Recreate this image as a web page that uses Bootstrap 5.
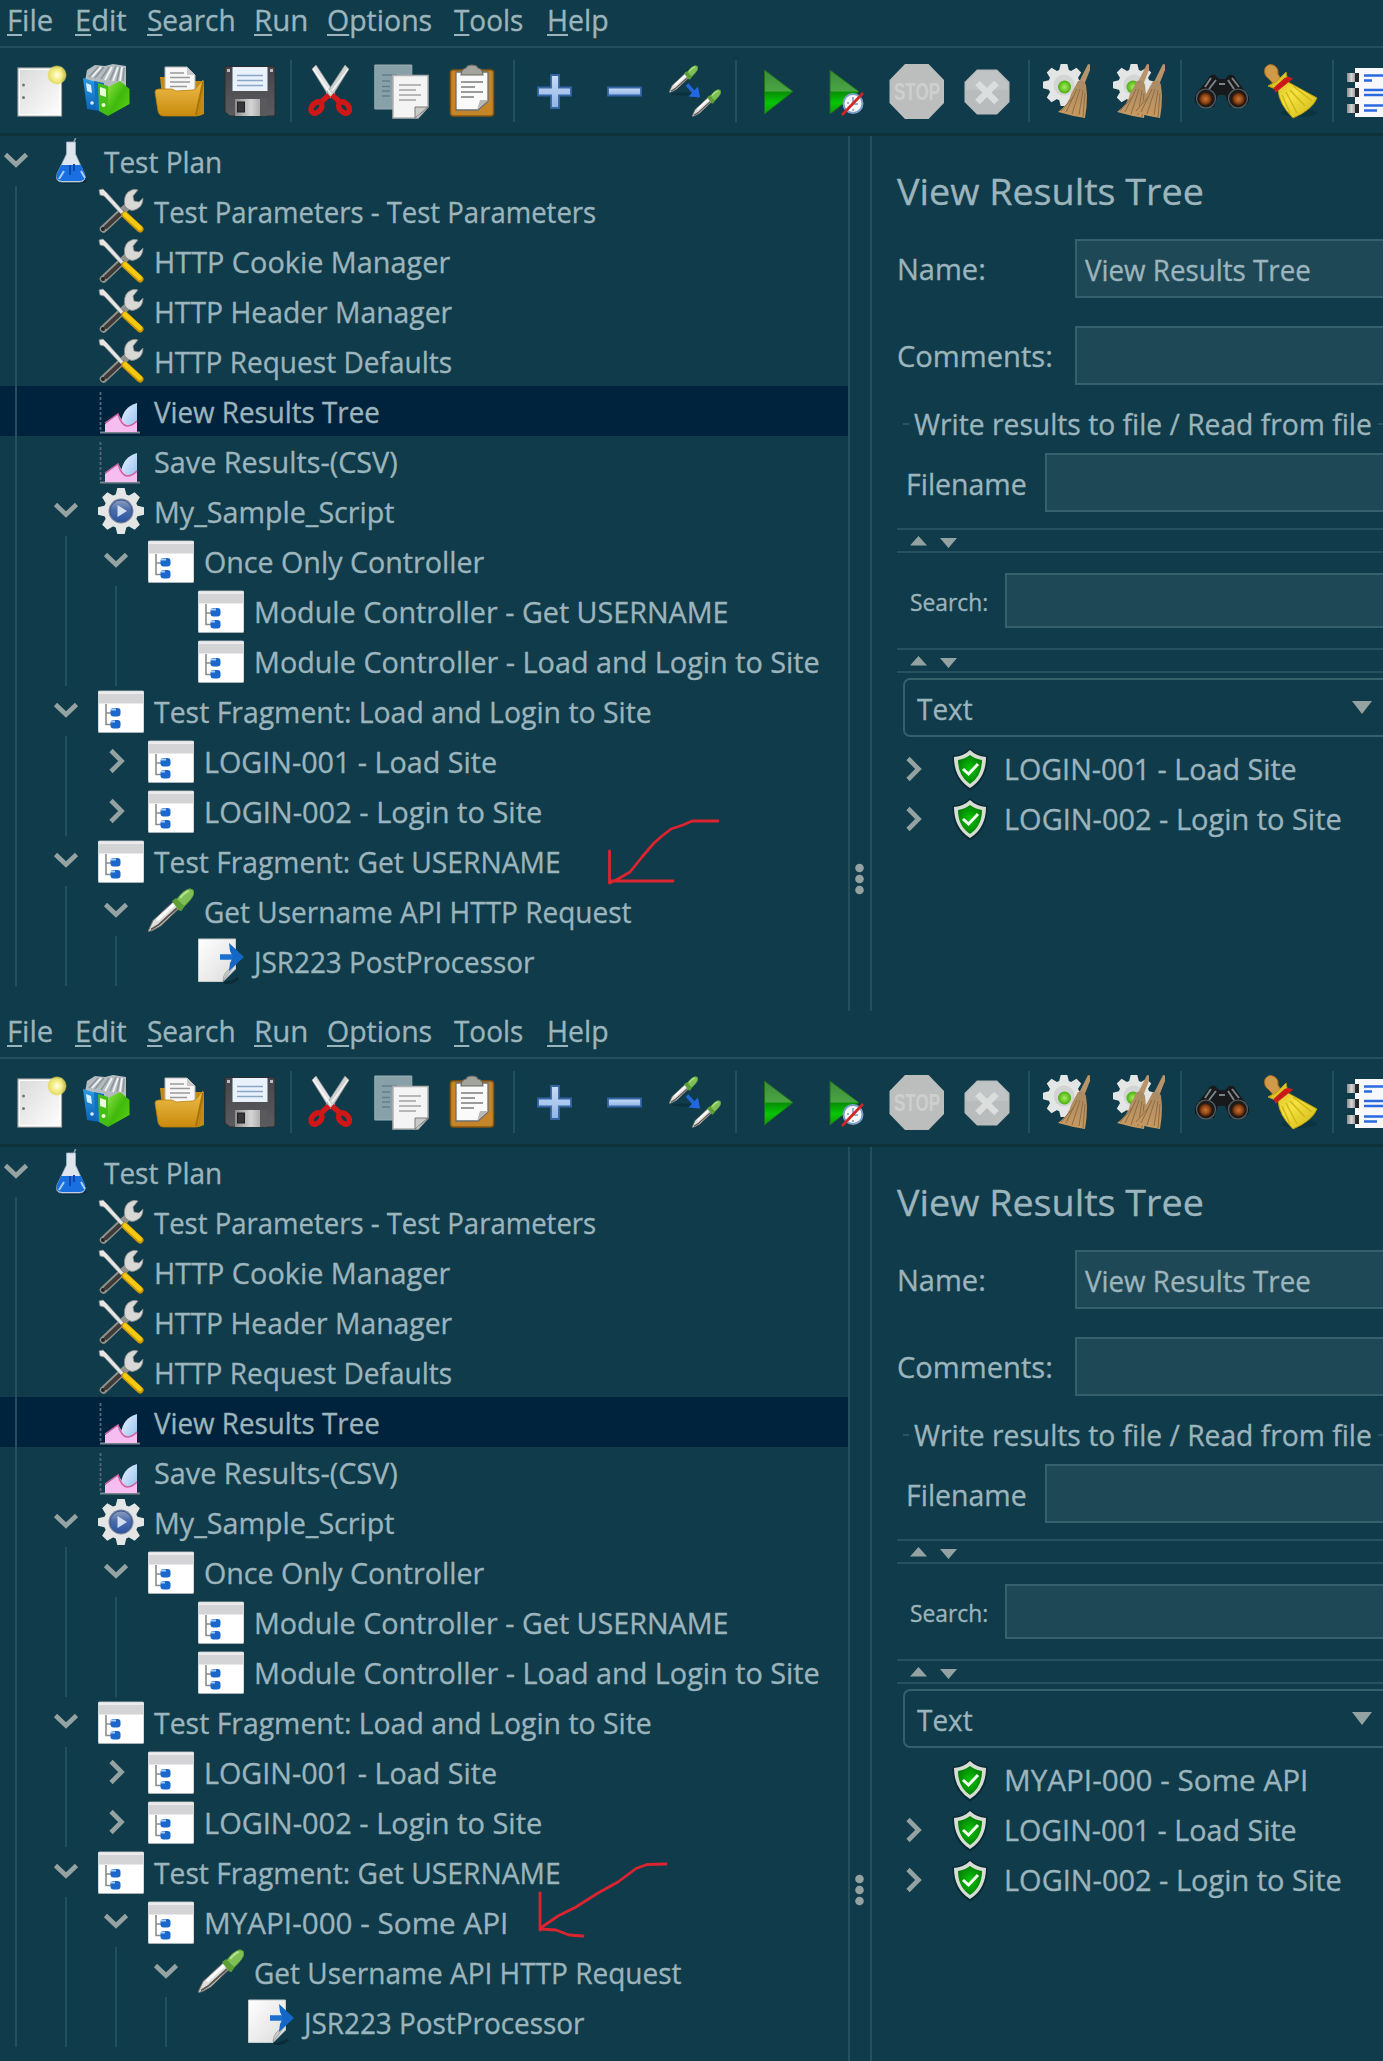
<!DOCTYPE html>
<html lang="en">
<head>
<meta charset="utf-8">
<title>View Results Tree</title>
<link href="https://cdn.jsdelivr.net/npm/bootstrap@5.3.0/dist/css/bootstrap.min.css" rel="stylesheet">
<style>
  body{background:#0f3b4a;color:#9cb4bc;font-family:"Open Sans","Noto Sans",sans-serif;font-size:30px;line-height:50px;overflow:hidden}
  .app-window{height:1011px}
  .app-window + .app-window{height:1050px}
  .fit{display:inline-block;white-space:pre;transform-origin:0 50%;-webkit-text-stroke:.35px #9cb4bc}
  .menu-bar{height:48px;padding-left:7px;line-height:39px;border-bottom:2px solid #24505e}
  .menu-bar u{text-underline-offset:3px;text-decoration-thickness:2px;text-decoration-skip-ink:none}
  .tool-bar{height:88px;padding-left:5px;border-bottom:3px solid #0e323c}
  .tool-cell{width:70px;height:84px}
  .tool-cell svg{width:56px;height:56px;overflow:visible}
  .tool-sep{width:12.44px;height:62px}
  .tool-sep::after{content:"";display:block;width:2px;height:62px;margin:0 auto;background:#23505d}
  .tree-pane{width:848px}
  .tree-row{height:50px}
  .tree-row.selected{background:#00233d}
  .guide{width:50px;height:50px;padding-left:15px}
  .guide::before{content:"";display:block;width:2px;height:50px;background:#22505d}
  .twisty{width:48px;height:50px}
  .twisty svg,.res-twisty svg{width:32px;height:50px;display:block}
  .tree-icon{width:46px;height:46px;overflow:visible}
  .tree-label{margin-left:10px;padding-top:2px}
  .splitter{width:24px;border-left:2px solid #23505c;border-right:2px solid #23505c}
  .splitter svg{width:20px;height:40px;margin-top:723px}
  .detail{padding-left:25px}
  .detail-title{height:102.5px;line-height:110px;font-size:37px}
  .field-row{height:59px}
  .field-name{padding-top:2px}
  .field-box{height:59px;background:#1e4856;border:2px solid #35606c;border-right:0;padding-left:8px;line-height:57px}
  .legend-row{height:68.5px;line-height:78px}
  .legend-row i{height:2px;background:#2a5562;margin-top:38px}
  .fold-bar{height:25px;border-top:2px solid #26525f;border-bottom:2px solid #26525f;padding-left:12px}
  .fold-bar svg{width:50px;height:21px}
  .combo{height:59px;margin-left:6px;border:2px solid #35606c;border-right:0;border-radius:7px 0 0 7px;padding:0 11px 0 12px;line-height:57px}
  .combo .fit{padding-top:2px}
  .res-twisty{width:56px;height:50px}
  .shield{width:38px;height:44px}
  .pen{left:0;top:0;width:848px;height:1010px;pointer-events:none}
</style>
<script src="https://cdn.jsdelivr.net/npm/bootstrap@5.3.0/dist/js/bootstrap.bundle.min.js"></script>
</head>
<body>
<svg width="0" height="0" class="position-absolute">
  <defs>
    <linearGradient id="paper" x1="0" y1="0" x2="1" y2="1"><stop offset="0" stop-color="#fff"/><stop offset="1" stop-color="#dcdcdc"/></linearGradient>
    <linearGradient id="page2" x1="0" y1="0" x2="1" y2="1"><stop offset="0" stop-color="#d9d9d9"/><stop offset="1" stop-color="#fff"/></linearGradient>
    <linearGradient id="gold" x1="0" y1="0" x2="0" y2="1"><stop offset="0" stop-color="#eebf4c"/><stop offset="1" stop-color="#c98a0d"/></linearGradient>
    <linearGradient id="leaf" x1="0" y1="0" x2="1" y2="1"><stop offset="0" stop-color="#8be33d"/><stop offset=".5" stop-color="#3fb90c"/><stop offset="1" stop-color="#5fd614"/></linearGradient>
    <linearGradient id="sky" x1="0" y1="0" x2="0" y2="1"><stop offset="0" stop-color="#2b9ce4"/><stop offset="1" stop-color="#0b62b5"/></linearGradient>
    <linearGradient id="steel" x1="0" y1="0" x2="1" y2="0"><stop offset="0" stop-color="#8c8c8c"/><stop offset=".5" stop-color="#d5d5d5"/><stop offset="1" stop-color="#909090"/></linearGradient>
    <linearGradient id="dark" x1="0" y1="0" x2="0" y2="1"><stop offset="0" stop-color="#44444a"/><stop offset="1" stop-color="#5c5c60"/></linearGradient>
    <linearGradient id="go" x1="0" y1="0" x2="0" y2="1"><stop offset="0" stop-color="#3c8a3a"/><stop offset=".48" stop-color="#4aa544"/><stop offset=".5" stop-color="#078f05"/><stop offset=".75" stop-color="#05c605"/><stop offset="1" stop-color="#17960f"/></linearGradient>
    <linearGradient id="straw" x1="0" y1="0" x2="0" y2="1"><stop offset="0" stop-color="#a98a64"/><stop offset="1" stop-color="#c99a5f"/></linearGradient>
    <linearGradient id="sweep" x1="0" y1="0" x2="1" y2="1"><stop offset="0" stop-color="#c7ac13"/><stop offset=".5" stop-color="#f5e33f"/><stop offset="1" stop-color="#cdb414"/></linearGradient>
    <radialGradient id="lens"><stop offset="0" stop-color="#c97536"/><stop offset=".6" stop-color="#8d4415"/><stop offset="1" stop-color="#291106"/></radialGradient>
    <radialGradient id="orb"><stop offset="0" stop-color="#a6ee5e"/><stop offset="1" stop-color="#4aae0d"/></radialGradient>
    <radialGradient id="glow"><stop offset="0" stop-color="#fffef0"/><stop offset=".45" stop-color="#f7f08b"/><stop offset=".85" stop-color="#e4dc58" stop-opacity=".85"/><stop offset="1" stop-color="#e4dc58" stop-opacity="0"/></radialGradient>
    <linearGradient id="bluegem" x1="0" y1="0" x2="0" y2="1"><stop offset="0" stop-color="#8f9fbf"/><stop offset=".45" stop-color="#4a6cab"/><stop offset="1" stop-color="#2b56a3"/></linearGradient>
    <linearGradient id="wave" x1="0" y1="0" x2="1" y2="1"><stop offset="0" stop-color="#eef6ff"/><stop offset="1" stop-color="#8fbdf0"/></linearGradient>
    <radialGradient id="okfill"><stop offset="0" stop-color="#08c608"/><stop offset="1" stop-color="#058205"/></radialGradient>
    <linearGradient id="plusfill" x1="0" y1="0" x2="0" y2="1"><stop offset="0" stop-color="#c9dcf5"/><stop offset="1" stop-color="#8fb4e6"/></linearGradient>
  </defs>

  <symbol id="t-new" viewBox="0 0 56 56"><rect x="6" y="5" width="43.5" height="48" fill="url(#page2)" stroke="#a5a5a2" stroke-width="1.2"/><rect x="7.4" y="6.3" width="40.8" height="45.4" fill="none" stroke="#fff" stroke-width="1.3"/><circle cx="11.5" cy="22" r="1.5" fill="#777"/><circle cx="11.5" cy="34.5" r="1.5" fill="#777"/><circle cx="45" cy="12" r="10" fill="url(#glow)"/></symbol>
  <symbol id="t-books" viewBox="0 0 56 56"><path d="M5 7L13 2l10 1 8-2 13 2v20L28 28 3 18z" fill="#b4bcc0"/><path d="M7 14l9-10M13 15l9-11M19 16l8-12M28 17l6-14M35 18l3-14M41 18l1-13" stroke="#8b959b" stroke-width="1.5"/><path d="M10 14l9-10M23 17l7-13M31 18l5-14M38 18l2-14" stroke="#f2f4f5" stroke-width="1.8"/><path d="M1 15l16 5v28l-12-2z" fill="url(#sky)"/><path d="M12 18l10 2v28l-8-2z" fill="#0e6fc3"/><path d="M4 20l5 2 1 8-5-2z" fill="#d9efff"/><circle cx="10" cy="40" r="1.8" fill="#d9efff"/><path d="M16 20l10 3v30l-9-5z" fill="#45bd17"/><path d="M26 24l12-6 9.500 8v15L26 53z" fill="url(#leaf)"/><path d="M18 24l6 2v8l-6-2z" fill="#e7ffd6"/><circle cx="21.500" cy="42" r="2" fill="#e7ffd6"/></symbol>
  <symbol id="t-open" viewBox="0 0 56 56"><path d="M8 14h11l3 4h30v33l-5 2H12z" fill="#c58a12"/><path d="M13 4h22l8 8v18H13z" fill="#f7f7f7" stroke="#b5b5b5"/><path d="M35 4v8h8z" fill="#c9c9c9"/><path d="M18 10h14M18 14.500h20M18 19h20M18 23.500h17" stroke="#9a9a9a" stroke-width="1.600"/><path d="M3 29q0-3 4-3h13l4 2 17-1q3-1 4-3l6-7-4 34q0 2-3 2H12q-5 0-6-5z" fill="url(#gold)" stroke="#b77d0a" stroke-width=".8"/><path d="M51 19L44 52" stroke="#a97108" stroke-width="2"/></symbol>
  <symbol id="t-save" viewBox="0 0 56 56"><path d="M3 5q0-1.500 2-1.500h46q2 0 2 2V51q0 2-2 2H8l-5-4z" fill="url(#dark)" stroke="#2c2c30"/><path d="M10.500 4h35v24h-35z" fill="#e9f2fb"/><path d="M15 12.500h26M15 17.500h26M15 22.500h26" stroke="#8ba5c4" stroke-width="1.600"/><path d="M13 36h32v17H13z" fill="url(#steel)"/><path d="M38 36h7v17h-7z" fill="#59595d"/><rect x="15.500" y="39" width="7" height="10" fill="#36363a" stroke="#222"/><path d="M5 6h3v3H5zM48 6h3v3h-3z" fill="#bbb"/></symbol>
  <symbol id="t-cut" viewBox="0 0 56 56"><path d="M8 6l4-4 19 29-5 4z" fill="#e4e4e4" stroke="#9b9b9b" stroke-width=".7"/><path d="M45 6l-4-4-19 29 5 4z" fill="#cfd2d2" stroke="#8f8f8f" stroke-width=".7"/><path d="M9 6l18 25M44 6L28 28" stroke="#fff" stroke-width="1.200"/><ellipse cx="12.500" cy="44.500" rx="4.500" ry="6.500" transform="rotate(42 12.500 44.500)" fill="none" stroke="#cf1717" stroke-width="5.500"/><ellipse cx="40" cy="44.500" rx="4.500" ry="6.500" transform="rotate(-42 40 44.500)" fill="none" stroke="#cf1717" stroke-width="5.500"/><path d="M18 38l7-6M35 38l-7-6" stroke="#d31919" stroke-width="5.500"/></symbol>
  <symbol id="t-copy" viewBox="0 0 56 56"><path d="M.8 2h37v44H.8z" fill="#88a0a8" stroke="#9aafb6"/><path d="M8 12h15M8 18h8M8 23.500h8M8 28h8M8 33h8" stroke="#62808a" stroke-width="1.600"/><path d="M19 12.500h35V44L44 55H19z" fill="#f4f4f4" stroke="#b0b0b0" stroke-width="1.500"/><path d="M54 44H41v11z" fill="#c9c9c7" stroke="#7c7c7a"/><path d="M25 22h22M25 27h17M25 32h22M25 37h17" stroke="#a2a2a2" stroke-width="1.600"/></symbol>
  <symbol id="t-paste" viewBox="0 0 56 56"><rect x="6.500" y="7" width="43" height="46" rx="3" fill="#c5862a" stroke="#8a5610" stroke-width="1.500"/><path d="M12 9h32v29L34 47H12z" fill="#fafafa" stroke="#6d6d6d" stroke-width="1.300"/><path d="M44 37h-8l-3 10z" fill="#b9b9b7"/><path d="M17 19h22M17 24h14M17 29h22M17 34h13" stroke="#9b9b9b" stroke-width="1.800"/><path d="M17 12q0-6 5-7 1-3 6-3t6 3q5 1 5 7z" fill="#a4a49e" stroke="#696962" stroke-width="1.200"/></symbol>
  <symbol id="t-plus" viewBox="0 0 56 56"><path d="M24 12h8v12.500h12v8H32V45h-8V32.500H11v-8h13z" fill="url(#plusfill)" stroke="#3465a4" stroke-width="1.800"/></symbol>
  <symbol id="t-minus" viewBox="0 0 56 56"><path d="M11 24.500h33v8H11z" fill="url(#plusfill)" stroke="#3465a4" stroke-width="1.800"/></symbol>
  <symbol id="pip" viewBox="0 0 46 46"><path d="M0 43.500l5-11L25 14l6.500 6-19 18-8 4.500z" fill="#dededa" stroke="#77726e" stroke-width="1"/><path d="M9 32L26 16.500" stroke="#fff" stroke-width="3"/><path d="M3 41.500l8-5L29 20" fill="none" stroke="#5b5551" stroke-width="2"/><path d="M24 13l4-3 8.500 8.500-3 4.500q-3 0-4-2.500z" fill="#5b9f35"/><path d="M28.500 11.500Q36 1.500 42 .8q4 .5 4 4-.5 5-10 13.700z" fill="#7fbf55" stroke="#58943a"/><path d="M32 10q5-6 9-7" fill="none" stroke="#b4e38e" stroke-width="2"/></symbol>
  <symbol id="t-pips" viewBox="0 0 56 56"><ellipse cx="17" cy="31" rx="13" ry="1.500" fill="#0a303c"/><use href="#pip" x="2" y="2" width="29" height="29"/><use href="#pip" x="25" y="26" width="29" height="29"/><path d="M20 21.500l7 8" stroke="#2465d8" stroke-width="3.500"/><path d="M33 34.500l-2-11-9.500 10z" fill="#2368e2"/></symbol>
  <symbol id="t-play" viewBox="0 0 56 56"><path d="M15.500 7L44 28.500 15.500 51z" fill="url(#go)" stroke="#1b6f1b"/></symbol>
  <symbol id="t-playn" viewBox="0 0 56 56"><path d="M11 7l29 21.500L11 51z" fill="url(#go)" stroke="#1b6f1b"/><circle cx="34" cy="40.500" r="9.500" fill="#f3f6fa" stroke="#7f9fc8" stroke-width="2"/><path d="M34 34v7h5M28 40h2M34 46v2" stroke="#8498b2" stroke-width="1.500" fill="none"/><path d="M23 52l21-22" stroke="#d22525" stroke-width="2.600"/></symbol>
  <symbol id="t-x" viewBox="0 0 56 56"><path d="M18 6.500h20L50.500 19v20L38 51.500H18L5.500 39V19z" fill="#b9bcbd"/><path d="M7 20L18 8h20l11 12v7H7z" fill="#c7c9ca" opacity=".6"/><path d="M18.500 20l19 19M37.500 20l-19 19" stroke="#dcdede" stroke-width="6.500"/></symbol>
  <symbol id="cog" viewBox="-22 -22 44 44"><g fill="#e4e5e5"><circle r="16.500"/><path d="M-3.500-22h7l2 8h-11zM-3.500 22h7l2-8h-11z"/><path d="M-3.500-22h7l2 8h-11zM-3.500 22h7l2-8h-11z" transform="rotate(45)"/><path d="M-3.500-22h7l2 8h-11zM-3.500 22h7l2-8h-11z" transform="rotate(90)"/><path d="M-3.500-22h7l2 8h-11zM-3.500 22h7l2-8h-11z" transform="rotate(135)"/></g><circle r="11" fill="#d3d5d5"/></symbol>
  <symbol id="broomlet" viewBox="0 0 32 56"><path d="M30 1l4 1-8 20-6-1z" fill="#b8946a"/><path d="M20 18q6-2 8 4l1 10q0 12-2 23-13-2-27-6 11-8 13-18z" fill="url(#straw)"/><path d="M19 26L8 49M22 26l-8 25M25 27l-4 25M27 30l-2 24M16 33L3 48" stroke="#8d6d47" stroke-width="1"/></symbol>
  <symbol id="t-gb" viewBox="0 0 56 56"><use href="#cog" x="0" y="1" width="44" height="42"/><circle cx="22.500" cy="24" r="6.500" fill="url(#orb)"/><use href="#broomlet" x="16" y="0" width="32" height="56"/></symbol>
  <symbol id="t-gbb" viewBox="0 0 56 56"><use href="#cog" x="0" y="1" width="44" height="42"/><circle cx="21" cy="24" r="6.500" fill="url(#orb)"/><use href="#broomlet" x="5" y="0" width="32" height="56"/><use href="#broomlet" x="21" y="0" width="32" height="56"/></symbol>
  <symbol id="t-find" viewBox="0 0 56 56"><path d="M14 16q2-5 7-4l4 4h6l4-4q5-1 7 4l12 16q2 4 0 8l-4 4H36l-5-12h-7l-4 12H6l-5-5q-1-4 1-8z" fill="#17191b"/><path d="M11 24l6-9M15 26l7-9M45 24l-7-9M40 26l-6-9M25 21h6" stroke="#7c8387" stroke-width="2"/><circle cx="12" cy="35.500" r="9.500" fill="#1b1d1f" stroke="#5b6063" stroke-width="1.200"/><circle cx="44" cy="35.500" r="9.500" fill="#1b1d1f" stroke="#5b6063" stroke-width="1.200"/><circle cx="11.500" cy="36" r="7" fill="url(#lens)"/><circle cx="44.500" cy="36" r="7" fill="url(#lens)"/></symbol>
  <symbol id="t-broom" viewBox="0 0 56 56"><ellipse cx="35" cy="50" rx="18" ry="4" fill="#0b3340"/><path d="M1 5q4-6 10-2 4 3 3 8l5 8-6 6-8-9Q-1 12 1 5z" fill="#d19a48" stroke="#9b6a23"/><path d="M4 23l9-5 9-9 2 10 29 16q-5 12-24 20-14-14-15-28z" fill="url(#sweep)" stroke="#b89d0e"/><path d="M18 32l8 18M22 29l11 21M26 27l15 16M29 23l19 15" stroke="#d0b61c" stroke-width="1.500"/><path d="M12 28l15-12-3-1-3 1-10 9z" fill="#c3161c" stroke="#cf1d1d" stroke-width="2.200"/></symbol>
  <symbol id="t-notes" viewBox="0 0 56 56"><rect x="8" y="5" width="50" height="49" fill="#f7f8fa"/><g fill="url(#steel)"><rect x="0" y="10" width="9" height="9"/><rect x="0" y="25" width="9" height="9"/><rect x="0" y="41" width="9" height="9"/></g><g fill="#26282b"><rect x="8" y="10" width="4" height="9"/><rect x="8" y="25" width="4" height="9"/><rect x="8" y="41" width="4" height="9"/></g><path d="M17 12.500h40M17 27h40M17 32h40M17 42.500h40" stroke="#2a6ae0" stroke-width="2.400"/><path d="M17 17.500h8M17 47.500h13" stroke="#2a6ae0" stroke-width="2.400"/></symbol>

  <symbol id="i-flask" viewBox="0 0 46 46"><ellipse cx="24" cy="43" rx="15" ry="3" fill="#0a2d3c"/><path d="M24 9l4-10" stroke="#8496a0" stroke-width="1.600"/><path d="M18.500 4h9v12l9 20q2 8-5 8H14q-7 0-5-8l9.500-20z" fill="#dfe5ec" stroke="#9ab0c6" stroke-width=".8"/><path d="M13 27h20l4 9q1 7-5 7H14q-7 0-5-7z" fill="#1a6fe0"/><path d="M22 27v10M26 26v7" stroke="#0b48ac" stroke-width="2"/><path d="M16 33l-5 8M33 33l4 7" stroke="#a9cdfa" stroke-width="2"/></symbol>
  <symbol id="i-tools" viewBox="0 0 46 46"><path d="M5.500 41L33 15" stroke="#8f8f8b" stroke-width="7.500" stroke-linecap="round"/><path d="M8 39L24 24" stroke="#3d3a38" stroke-width="4" stroke-linecap="round"/><circle cx="5" cy="41" r="2" fill="#222"/><path d="M27 18q-2-9 3-14 5-4 10-2l-5 6 1 5 5 1 4-4q0 8-6 11-5 3-9 0z" fill="#d8d8d6" stroke="#8a8a88" stroke-width=".8"/><path d="M1 2l4-1 4 4 17 19-3 2L6 8 2 7z" fill="#e6e6e4" stroke="#8b8b8b" stroke-width=".8"/><path d="M27 27l15 14" stroke="#c99502" stroke-width="7" stroke-linecap="round"/><path d="M27 26.500l15 13.500" stroke="#f3c911" stroke-width="4.500" stroke-linecap="round"/></symbol>
  <symbol id="i-chart" viewBox="0 0 46 46"><path d="M2.500 4v40" stroke="#56687a" stroke-width="1.800" stroke-dasharray="3 2"/><path d="M2 44.500h40" stroke="#7a8590" stroke-width="1.800"/><path d="M23 34q2-15 16-19v26H23z" fill="url(#wave)"/><path d="M7 36l13-10 4 6q3 6 8 5l7-3v10H7z" fill="#f5bdf0"/><path d="M7 35l13-9q3 11 9 12 5 0 10-5" fill="none" stroke="#d0609c" stroke-width="1.500"/></symbol>
  <symbol id="i-gear" viewBox="0 0 46 46"><use href="#cog" x="0" y="0" width="46" height="46"/><circle cx="23" cy="23" r="12.500" fill="#7b89a6"/><circle cx="23" cy="23" r="11" fill="url(#bluegem)" stroke="#38558c"/><path d="M19.500 17l9.500 6-9.500 6z" fill="#d3def0"/></symbol>
  <symbol id="i-window" viewBox="0 0 46 46"><rect x="0" y="3" width="46" height="41.500" rx="1.500" fill="#fff" stroke="#a9b2b6" stroke-width="1"/><path d="M.5 3.500h45v12h-45z" fill="#d4d4d6"/><path d="M.5 3.500h45v2.500h-45z" fill="#ececee"/><path d="M8 16v20.500h6M8 25h6" fill="none" stroke="#8c8c8c" stroke-width="1.600"/><rect x="12.500" y="20" width="10" height="8.500" rx="3" fill="#1b67cc"/><rect x="12.500" y="32" width="10" height="8.500" rx="3" fill="#1b67cc"/><path d="M13 21.500h5M13 33.500h4" stroke="#a7cdf7" stroke-width="2.200"/></symbol>
  <symbol id="i-post" viewBox="0 0 46 46"><path d="M26 45q10 0 14-5" stroke="#0a2c38" stroke-width="3" fill="none"/><path d="M.5 1h37v30L25 43.500H.5z" fill="url(#paper)" stroke="#c5cacb"/><path d="M37 27L25 43q0-10 12-16z" fill="#c9c9c9" stroke="#888" stroke-width=".6"/><path d="M22 19h14" stroke="#1b6fcf" stroke-width="5.500"/><path d="M31 5l15 14-15 14 1-8 3-6-3-6z" fill="#1467c7"/></symbol>
  <symbol id="i-ok" viewBox="0 0 38 44"><path d="M19 3q6 6 16 7 1 21-16 32Q2 31 3 10q10-1 16-7z" fill="#0a2f39" stroke="#0b2c36" stroke-width="3"/><path d="M19 3q6 6 16 7 0 21-16 31Q3 31 3 10q10-1 16-7z" fill="#d7ddd4"/><path d="M19 8q5 4 12 5 0 16-12 24Q7 29 7 13q7-1 12-5z" fill="url(#okfill)"/><path d="M12 22l5.500 5L27 17" fill="none" stroke="#f4fff0" stroke-width="3"/></symbol>
  <symbol id="c-down" viewBox="0 0 32 50"><path d="M5.500 18.500L16 28.500l10.500-10" fill="none" stroke="#94a3a2" stroke-width="4.600"/></symbol>
  <symbol id="c-right" viewBox="0 0 32 50"><path d="M11 14.500L21.500 25 11 35.500" fill="none" stroke="#94a3a2" stroke-width="4.600"/></symbol>
</svg>

<main id="windows"></main>

<script>
// [label, drawn width, distance to the next label]
const menus = [["File",43.5,68],["Edit",49,72],["Search",85.5,106.5],["Run",50,73],["Options",103,127],["Tools",68,93],["Help",58.5,70]];
const tools = ["new","books","open","save","|","cut","copy","paste","|","plus","minus","pips","|","play","playn","stop","x","|","gb","gbb","|","find","broom","|","notes"];
const stopSign = `<svg viewBox="0 0 56 56"><path d="M16 1h23.500L55 17v23L39.500 56H16L.5 40V17z" fill="#bcbebe"/><text x="28" y="36.500" text-anchor="middle" textLength="46" lengthAdjust="spacingAndGlyphs" font-family="Liberation Sans,sans-serif" font-weight="700" font-size="23" fill="#cdcfcf">STOP</text></svg>`;
// [level, toggle, icon, label, drawn width]
const shared = [
  [0,"down","flask","Test Plan",116],
  [1,"","tools","Test Parameters - Test Parameters",441],
  [1,"","tools","HTTP Cookie Manager",294],
  [1,"","tools","HTTP Header Manager",296],
  [1,"","tools","HTTP Request Defaults",295],
  [1,"","chart","View Results Tree",225],
  [1,"","chart","Save Results-(CSV)",242],
  [1,"down","gear","My_Sample_Script",238],
  [2,"down","window","Once Only Controller",279],
  [3,"","window","Module Controller - Get USERNAME",471],
  [3,"","window","Module Controller - Load and Login to Site",563],
  [1,"down","window","Test Fragment: Load and Login to Site",497],
  [2,"right","window","LOGIN-001 - Load Site",290.5],
  [2,"right","window","LOGIN-002 - Login to Site",335.5],
  [1,"down","window","Test Fragment: Get USERNAME",405]
];
const logins = [["right","LOGIN-001 - Load Site",290],["right","LOGIN-002 - Login to Site",335]];
const shots = [
  { tree: [...shared,[2,"down","pip","Get Username API HTTP Request",426],[3,"","post","JSR223 PostProcessor",283]],
    results: logins,
    pen: "M718 821H692L683 825 671 829 662 836 654 843 642 857 630 872 618 879 609.500 883V851M611 881H673" },
  { tree: [...shared,[2,"down","window","MYAPI-000 - Some API",300],[3,"down","pip","Get Username API HTTP Request",426],[4,"","post","JSR223 PostProcessor",283]],
    results: [["","MYAPI-000 - Some API",300],...logins],
    pen: "M666 853L647 853.500 636 857.500 618 871 598 882 576 896 558 905 542 916 540 919V882M540 918L556 919 569 924 583 925" }
];
const fit = (text, w, html) => `<span class="fit" data-w="${w}">${html || text}</span>`;
const chevron = c => c ? `<svg><use href="#c-${c}"/></svg>` : "";
const treeRow = ([lv,tog,ic,label,w]) => `
  <div class="tree-row d-flex align-items-center ${label === "View Results Tree" ? "selected" : ""}">
    ${'<div class="guide flex-shrink-0"></div>'.repeat(lv)}
    <div class="twisty flex-shrink-0">${chevron(tog)}</div>
    <svg class="tree-icon flex-shrink-0"><use href="#${ic === "pip" ? "pip" : "i-" + ic}"/></svg>
    <div class="tree-label">${fit(label,w)}</div>
  </div>`;
const foldBar = `<div class="fold-bar d-flex"><svg viewBox="0 0 50 21"><path d="M1 15.500h17L9.500 6zM31 8h17l-8.500 10z" fill="#94a3a2"/></svg></div>`;
document.getElementById("windows").innerHTML = shots.map(s => `
<section class="app-window d-flex flex-column position-relative overflow-hidden">
  <nav class="menu-bar d-flex flex-shrink-0">
    ${menus.map(([m,w,step]) => `<div class="flex-shrink-0" style="width:${step}px">${fit(m,w,`<u>${m[0]}</u>${m.slice(1)}`)}</div>`).join("")}
  </nav>
  <div class="tool-bar d-flex align-items-center flex-shrink-0">
    ${tools.map(t => t === "|" ? '<div class="tool-sep flex-shrink-0"></div>' : `<div class="tool-cell d-flex align-items-center justify-content-center flex-shrink-0">${t === "stop" ? stopSign : `<svg><use href="#t-${t}"/></svg>`}</div>`).join("")}
  </div>
  <div class="d-flex flex-grow-1">
    <div class="tree-pane flex-shrink-0">${s.tree.map(treeRow).join("")}</div>
    <div class="splitter d-flex align-items-start flex-shrink-0"><svg viewBox="0 0 20 40"><g fill="#94a3a2"><circle cx="9.500" cy="9" r="4.300"/><circle cx="9.500" cy="20" r="4.300"/><circle cx="9.500" cy="31" r="4.300"/></g></svg></div>
    <div class="detail flex-grow-1 overflow-hidden">
      <div class="detail-title">${fit("View Results Tree",305)}</div>
      <div class="field-row d-flex align-items-center">
        <div class="field-name flex-shrink-0" style="width:178px">${fit("Name:",85)}</div><div class="field-box flex-grow-1">${fit("View Results Tree",225)}</div>
      </div>
      <div class="field-row d-flex align-items-center" style="margin-top:28px">
        <div class="field-name flex-shrink-0" style="width:178px">${fit("Comments:",153)}</div><div class="field-box flex-grow-1"></div>
      </div>
      <div class="legend-row d-flex"><i class="flex-shrink-0" style="width:6px;margin-left:6px"></i><div class="flex-shrink-0" style="width:469px;padding-left:5px">${fit("Write results to file / Read from file",457)}</div><i class="flex-grow-1"></i></div>
      <div class="field-row d-flex align-items-center">
        <div class="field-name flex-shrink-0" style="width:148px;padding-left:9px">${fit("Filename",118)}</div><div class="field-box flex-grow-1"></div>
      </div>
      <div style="height:16px"></div>
      ${foldBar}
      <div class="d-flex align-items-center" style="height:95px">
        <div class="field-name flex-shrink-0" style="width:108px;padding-left:13px;font-size:24px">${fit("Search:",76)}</div><div class="field-box flex-grow-1" style="height:55px"></div>
      </div>
      ${foldBar}
      <div class="combo d-flex justify-content-between align-items-center" style="margin-top:5px">${fit("Text",55)}<svg width="20" height="14" viewBox="0 0 20 14"><path d="M0 0h20L10 13z" fill="#94a3a2"/></svg></div>
      <div style="margin-top:7px">
        ${s.results.map(([tog,label,w]) => `<div class="d-flex align-items-center tree-row"><div class="res-twisty flex-shrink-0">${chevron(tog)}</div><svg class="shield flex-shrink-0" style="margin-left:-2px"><use href="#i-ok"/></svg><div style="margin-left:15px">${fit(label,w)}</div></div>`).join("")}
      </div>
    </div>
  </div>
  <svg class="pen position-absolute" viewBox="0 0 848 1010"><path d="${s.pen}" fill="none" stroke="#dc2430" stroke-width="2.800" stroke-linecap="round" stroke-linejoin="round"/></svg>
</section>`).join("");

// Narrow each label to its measured width.
const pen = document.createElement("canvas").getContext("2d");
document.querySelectorAll(".fit").forEach(el => {
  const cs = getComputedStyle(el);
  pen.font = `${cs.fontSize} ${cs.fontFamily}`;
  const m = pen.measureText(el.textContent);
  const ink = m.actualBoundingBoxRight + m.actualBoundingBoxLeft;
  el.style.transform = `scaleX(${(el.dataset.w / ink).toFixed(4)})`;
});
</script>
</body>
</html>
